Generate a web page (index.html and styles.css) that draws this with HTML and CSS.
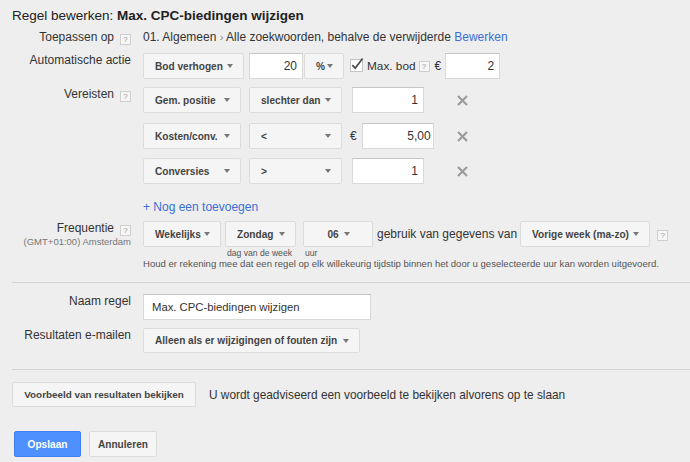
FILE: index.html
```html
<!DOCTYPE html>
<html lang="nl">
<head>
<meta charset="utf-8">
<title>Regel bewerken</title>
<link rel="stylesheet" href="styles.css">
</head>
<body>
<div class="page">
  <h1 class="title">Regel bewerken: <b>Max. CPC-biedingen wijzigen</b></h1>

  <div class="row row-apply">
    <div class="label">Toepassen op<span class="help">?</span></div>
    <div class="content">01. Algemeen <span class="crumb">›</span> Alle zoekwoorden, behalve de verwijderde <a class="link">Bewerken</a></div>
  </div>

  <div class="row row-action">
    <div class="label">Automatische actie</div>
    <div class="content controls">
      <button class="dd dd-action">Bod verhogen<i class="caret"></i></button>
      <input class="input w-pct" type="text" value="20">
      <button class="dd dd-unit">%<i class="caret"></i></button>
      <span class="check"><svg width="14" height="15" viewBox="0 0 14 15"><rect x="0.5" y="2.5" width="12" height="12" fill="#fff" stroke="#c4c4c4"/><path d="M2.3 8.2 L5.2 11.2 L12.6 1.6" fill="none" stroke="#4a4a4a" stroke-width="1.7"/></svg></span>
      <span class="inline-text maxbod">Max. bod</span>
      <span class="help help-inline">?</span>
      <span class="euro">€</span>
      <input class="input w-max" type="text" value="2">
    </div>
  </div>

  <div class="row row-req">
    <div class="label">Vereisten<span class="help">?</span></div>
    <div class="content conds">
      <div class="cond">
        <button class="dd dd-metric">Gem. positie<i class="caret"></i></button>
        <button class="dd dd-op">slechter dan<i class="caret"></i></button>
        <div class="val"><input class="input w-val" type="text" value="1"></div>
        <span class="remove"><svg width="11" height="11" viewBox="0 0 11 11"><path d="M1 1 L10 10 M10 1 L1 10" stroke="#9a9a9a" stroke-width="2.1"/></svg></span>
      </div>
      <div class="cond">
        <button class="dd dd-metric">Kosten/conv.<i class="caret"></i></button>
        <button class="dd dd-op">&lt;<i class="caret"></i></button>
        <div class="val"><span class="euro euro-val">€</span><input class="input w-val tight" type="text" value="5,00"></div>
        <span class="remove"><svg width="11" height="11" viewBox="0 0 11 11"><path d="M1 1 L10 10 M10 1 L1 10" stroke="#9a9a9a" stroke-width="2.1"/></svg></span>
      </div>
      <div class="cond">
        <button class="dd dd-metric">Conversies<i class="caret"></i></button>
        <button class="dd dd-op">&gt;<i class="caret"></i></button>
        <div class="val"><input class="input w-val" type="text" value="1"></div>
        <span class="remove"><svg width="11" height="11" viewBox="0 0 11 11"><path d="M1 1 L10 10 M10 1 L1 10" stroke="#9a9a9a" stroke-width="2.1"/></svg></span>
      </div>
      <a class="link add">+ Nog een toevoegen</a>
    </div>
  </div>

  <div class="row row-freq">
    <div class="label">Frequentie<span class="help">?</span><div class="tz">(GMT+01:00) Amsterdam</div></div>
    <div class="content">
      <div class="controls freq">
        <button class="dd dd-week">Wekelijks<i class="caret"></i></button>
        <div class="field f-day"><button class="dd dd-day">Zondag<i class="caret"></i></button><span class="caption">dag van de week</span></div>
        <div class="field f-hour"><button class="dd dd-hour">06<i class="caret"></i></button><span class="caption">uur</span></div>
        <span class="inline-text usage">gebruik van gegevens van</span>
        <button class="dd dd-range">Vorige week (ma-zo)<i class="caret"></i></button>
        <span class="help help-freq">?</span>
      </div>
      <p class="note">Houd er rekening mee dat een regel op elk willekeurig tijdstip binnen het door u geselecteerde uur kan worden uitgevoerd.</p>
    </div>
  </div>

  <div class="divider div-1"></div>

  <div class="row row-name">
    <div class="label">Naam regel</div>
    <div class="content"><input class="input name" type="text" value="Max. CPC-biedingen wijzigen"></div>
  </div>

  <div class="row row-mail">
    <div class="label">Resultaten e-mailen</div>
    <div class="content"><button class="dd dd-mail">Alleen als er wijzigingen of fouten zijn<i class="caret"></i></button></div>
  </div>

  <div class="divider div-2"></div>

  <div class="preview">
    <button class="btn btn-preview">Voorbeeld van resultaten bekijken</button>
    <span class="preview-text">U wordt geadviseerd een voorbeeld te bekijken alvorens op te slaan</span>
  </div>

  <div class="actions">
    <button class="btn btn-primary">Opslaan</button>
    <button class="btn btn-cancel">Annuleren</button>
  </div>
</div>
</body>
</html>
```

FILE: styles.css
```css
* { box-sizing: border-box; }
html, body { margin: 0; }
body {
  background: #eeeeee;
  font-family: "Liberation Sans", Arial, sans-serif;
  font-size: 12px;
  color: #333;
  width: 690px;
  height: 462px;
  overflow: hidden;
}
.page { padding: 7px 0 0 12px; }

.title {
  margin: 0;
  font-size: 13.5px;
  line-height: 18px;
  font-weight: normal;
  color: #222;
}
.title b { font-weight: bold; }

.row { display: flex; align-items: flex-start; }
.label {
  flex: none;
  width: 119px;
  margin-right: 12px;
  text-align: right;
  line-height: 15px;
  color: #333;
}
.content { flex: 1 1 auto; min-width: 0; }

.help {
  display: inline-block;
  width: 11px;
  height: 11px;
  margin-left: 6px;
  border: 1px solid #cfcfcf;
  background: #f6f6f6;
  color: #999;
  font-size: 8px;
  line-height: 9px;
  text-align: center;
  vertical-align: -1px;
}

.link { color: #3a6fd8; cursor: pointer; }

/* Toepassen op */
.row-apply { margin-top: 3px; line-height: 18px; }
.row-apply .label { line-height: 18px; }
.crumb { color: #888; font-size: 11px; }

/* controls */
.controls { display: flex; align-items: center; }
.dd {
  display: inline-flex;
  align-items: center;
  flex: none;
  height: 26px;
  margin: 0;
  padding: 0 10px 0 11px;
  background: #f5f5f5;
  border: 1px solid #dcdcdc;
  border-radius: 2px;
  font-family: "Liberation Sans", Arial, sans-serif;
  font-size: 10.1px;
  font-weight: bold;
  color: #444;
  white-space: nowrap;
}
.caret {
  display: block;
  flex: none;
  width: 0;
  height: 0;
  margin-left: auto;
  border-left: 3px solid transparent;
  border-right: 3px solid transparent;
  border-top: 4px solid #777;
}
.input {
  height: 26px;
  margin: 0;
  padding: 0 5px;
  background: #fff;
  border: 1px solid #d9d9d9;
  border-top-color: #c6c6c6;
  border-radius: 0;
  font-family: "Liberation Sans", Arial, sans-serif;
  font-size: 12px;
  color: #333;
  text-align: right;
  outline: none;
}

/* Automatische actie */
.row-action { margin-top: 7px; }
.dd-action { width: 101px; }
.w-pct { width: 54px; margin-left: 5px; }
.dd-unit { width: 40px; margin-left: 1px; }
.check { display: block; width: 14px; height: 15px; margin-left: 6px; margin-top: -3px; }
.check svg { display: block; }
.inline-text { white-space: nowrap; }
.maxbod { margin-left: 3px; font-size: 11.8px; }
.help-inline { margin-left: 3px; }
.euro { margin-left: 5px; font-size: 12px; }
.w-max { width: 55px; margin-left: 4px; }

/* Vereisten */
.row-req { margin-top: 8px; }
.conds { display: flex; flex-direction: column; align-items: flex-start; }
.cond { display: flex; align-items: center; }
.cond + .cond { margin-top: 10px; }
.cond:nth-child(3) { margin-top: 9px; }
.dd-metric { width: 98px; }
.dd-op { width: 93px; margin-left: 8px; }
.val { display: flex; align-items: center; width: 115px; flex: none; }
.w-val { width: 72px; margin-left: 10px; }
.euro-val { margin-left: 8px; }
.euro-val + .w-val { margin-left: 5px; }
.tight { padding-right: 2px; }
.remove { display: block; width: 11px; height: 11px; }
.remove svg { display: block; }
.add { margin-top: 15px; line-height: 16px; }

/* Frequentie */
.row-freq { margin-top: 6px; }
.tz { font-size: 9.5px; line-height: 11px; color: #777; }
.freq { align-items: flex-start; }
.field { display: flex; flex-direction: column; align-items: flex-start; }
.dd-week { width: 78px; }
.f-day { margin-left: 4px; }
.dd-day { width: 71px; }
.f-hour { margin-left: 7px; }
.dd-hour { width: 70px; justify-content: center; }
.dd-hour .caret { margin-left: 5px; }
.caption {
  margin-top: 1px;
  padding-left: 2px;
  font-size: 8.6px;
  line-height: 10px;
  color: #555;
  white-space: nowrap;
}
.usage { margin-left: 4px; line-height: 26px; }
.dd-range { width: 130px; margin-left: 3px; }
.help-freq { margin-left: 7px; margin-top: 9px; }
.note {
  margin: 0;
  font-size: 9.55px;
  line-height: 11px;
  color: #555;
  white-space: nowrap;
}

.divider { height: 1px; background: #d4d4d4; }
.div-1 { margin-top: 13px; }
.div-2 { margin-top: 16px; }

/* Naam regel / e-mail */
.row-name { margin-top: 11px; }
.name { width: 228px; text-align: left; padding: 0 8px; font-size: 11.3px; }
.row-mail { margin-top: 8px; }
.dd-mail { height: 25px; width: 217px; }

/* Preview & actions */
.btn {
  display: inline-flex;
  align-items: center;
  justify-content: center;
  height: 25px;
  margin: 0;
  padding: 0 11px;
  background: #f5f5f5;
  border: 1px solid #dcdcdc;
  border-radius: 2px;
  font-family: "Liberation Sans", Arial, sans-serif;
  font-size: 10.1px;
  font-weight: bold;
  color: #444;
  white-space: nowrap;
}
.preview { display: flex; align-items: center; margin-top: 12px; }
.btn-preview { width: 184px; font-size: 9.9px; padding: 0 5px; }
.preview-text { margin-left: 13px; font-size: 11.85px; color: #333; }
.actions { display: flex; margin-top: 24px; margin-left: 2px; }
.actions .btn { height: 26px; min-width: 67px; padding: 0 8px; }
.btn-primary { background: #4d90fe; border-color: #3b7ff0; color: #fff; }
.btn-cancel { margin-left: 8px; }
```
